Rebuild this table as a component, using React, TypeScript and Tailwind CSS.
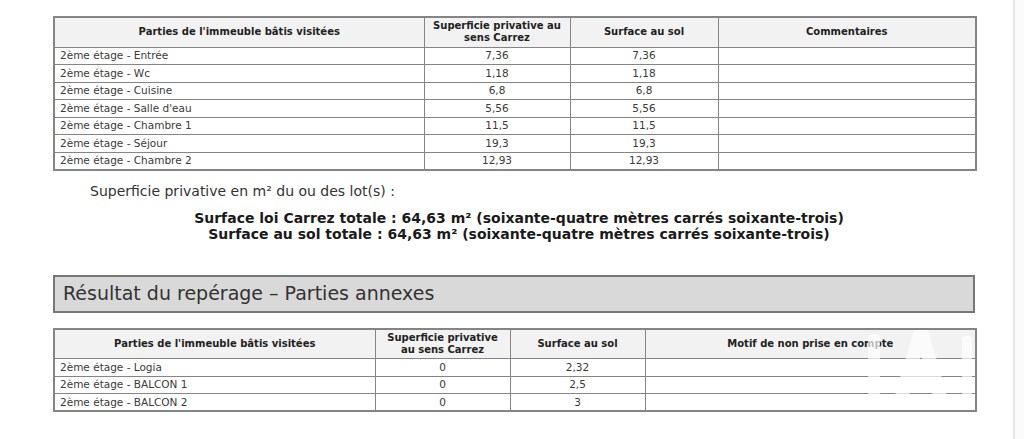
import React from "react";

const font = { fontFamily: '"DejaVu Sans", Verdana, sans-serif' };

const mainRows = [
  ["2ème étage - Entrée", "7,36", "7,36"],
  ["2ème étage - Wc", "1,18", "1,18"],
  ["2ème étage - Cuisine", "6,8", "6,8"],
  ["2ème étage - Salle d'eau", "5,56", "5,56"],
  ["2ème étage - Chambre 1", "11,5", "11,5"],
  ["2ème étage - Séjour", "19,3", "19,3"],
  ["2ème étage - Chambre 2", "12,93", "12,93"],
];

const annexRows = [
  ["2ème étage - Logia", "0", "2,32"],
  ["2ème étage - BALCON 1", "0", "2,5"],
  ["2ème étage - BALCON 2", "0", "3"],
];

const th = "border border-[#858585] bg-[#f2f2f2] text-[10px] font-bold text-[#222] leading-[12px] text-center align-middle px-1";
const td = "border border-[#858585] text-[10.5px] text-[#3a3a3a] leading-[13px] h-[17.5px] p-0 align-middle";

function AreaTable({
  widths,
  headers,
  rows,
}: {
  widths: number[];
  headers: string[][];
  rows: string[][];
}) {
  return (
    <table className="w-[922px] border-collapse table-fixed border-2 border-[#858585]">
      <colgroup>
        {widths.map((w, i) => (
          <col key={i} style={{ width: w }} />
        ))}
      </colgroup>
      <thead>
        <tr className="h-[30px]">
          {headers.map((h, i) => (
            <th key={i} className={th}>
              {h.map((line, j) => (
                <div key={j}>{line}</div>
              ))}
            </th>
          ))}
        </tr>
      </thead>
      <tbody>
        {rows.map((r, i) => (
          <tr key={i}>
            <td className={`${td} pl-[5px]`}>{r[0]}</td>
            <td className={`${td} text-center`}>{r[1]}</td>
            <td className={`${td} text-center`}>{r[2]}</td>
            <td className={td}></td>
          </tr>
        ))}
      </tbody>
    </table>
  );
}

export default function App() {
  return (
    <div className="w-[1024px] h-[439px] bg-white flex overflow-hidden" style={font}>
      <div className="relative w-[1013px] h-full pl-[53px] pt-[16px]">
        <AreaTable
          widths={[370, 146, 148, 258]}
          headers={[
            ["Parties de l'immeuble bâtis visitées"],
            ["Superficie privative au", "sens Carrez"],
            ["Surface au sol"],
            ["Commentaires"],
          ]}
          rows={mainRows}
        />

        <p className="mt-[12px] ml-[37px] text-[14px] leading-[17px] text-[#333]">
          Superficie privative en m² du ou des lot(s) :
        </p>

        <div className="w-[922px] mt-[10px] pl-[10px] text-center text-[14px] font-bold leading-[16px] text-[#1a1a1a]">
          <div>Surface loi Carrez totale : 64,63 m² (soixante-quatre mètres carrés soixante-trois)</div>
          <div>Surface au sol totale : 64,63 m² (soixante-quatre mètres carrés soixante-trois)</div>
        </div>

        <div className="w-[922px] h-[38px] mt-[33px] bg-[#d9d9d9] border-2 border-[#777] flex items-center pl-[8px]">
          <span className="text-[19px] text-[#333] leading-none">
            Résultat du repérage – Parties annexes
          </span>
        </div>

        <div className="mt-[15px]">
          <AreaTable
            widths={[321, 135, 135, 331]}
            headers={[
              ["Parties de l'immeuble bâtis visitées"],
              ["Superficie privative", "au sens Carrez"],
              ["Surface au sol"],
              ["Motif de non prise en compte"],
            ]}
            rows={annexRows}
          />
        </div>

        {/* faint watermark over the annex table */}
        <svg
          className="absolute left-[866px] top-[330px] pointer-events-none"
          width="108"
          height="78"
          viewBox="0 0 108 78"
        >
          <g fill="#ffffff" opacity="0.7">
            <rect x="2" y="4" width="12" height="72" rx="5" />
            <path d="M48 0 L62 0 L84 76 L70 76 L64 56 L46 56 L40 76 L26 76 Z M50 44 L60 44 L55 24 Z" />
            <rect x="96" y="6" width="10" height="62" rx="4" />
          </g>
        </svg>
      </div>
      <div className="flex-1 border-l-2 border-[#e6e6e6] bg-[#fbfbfb]" />
    </div>
  );
}
